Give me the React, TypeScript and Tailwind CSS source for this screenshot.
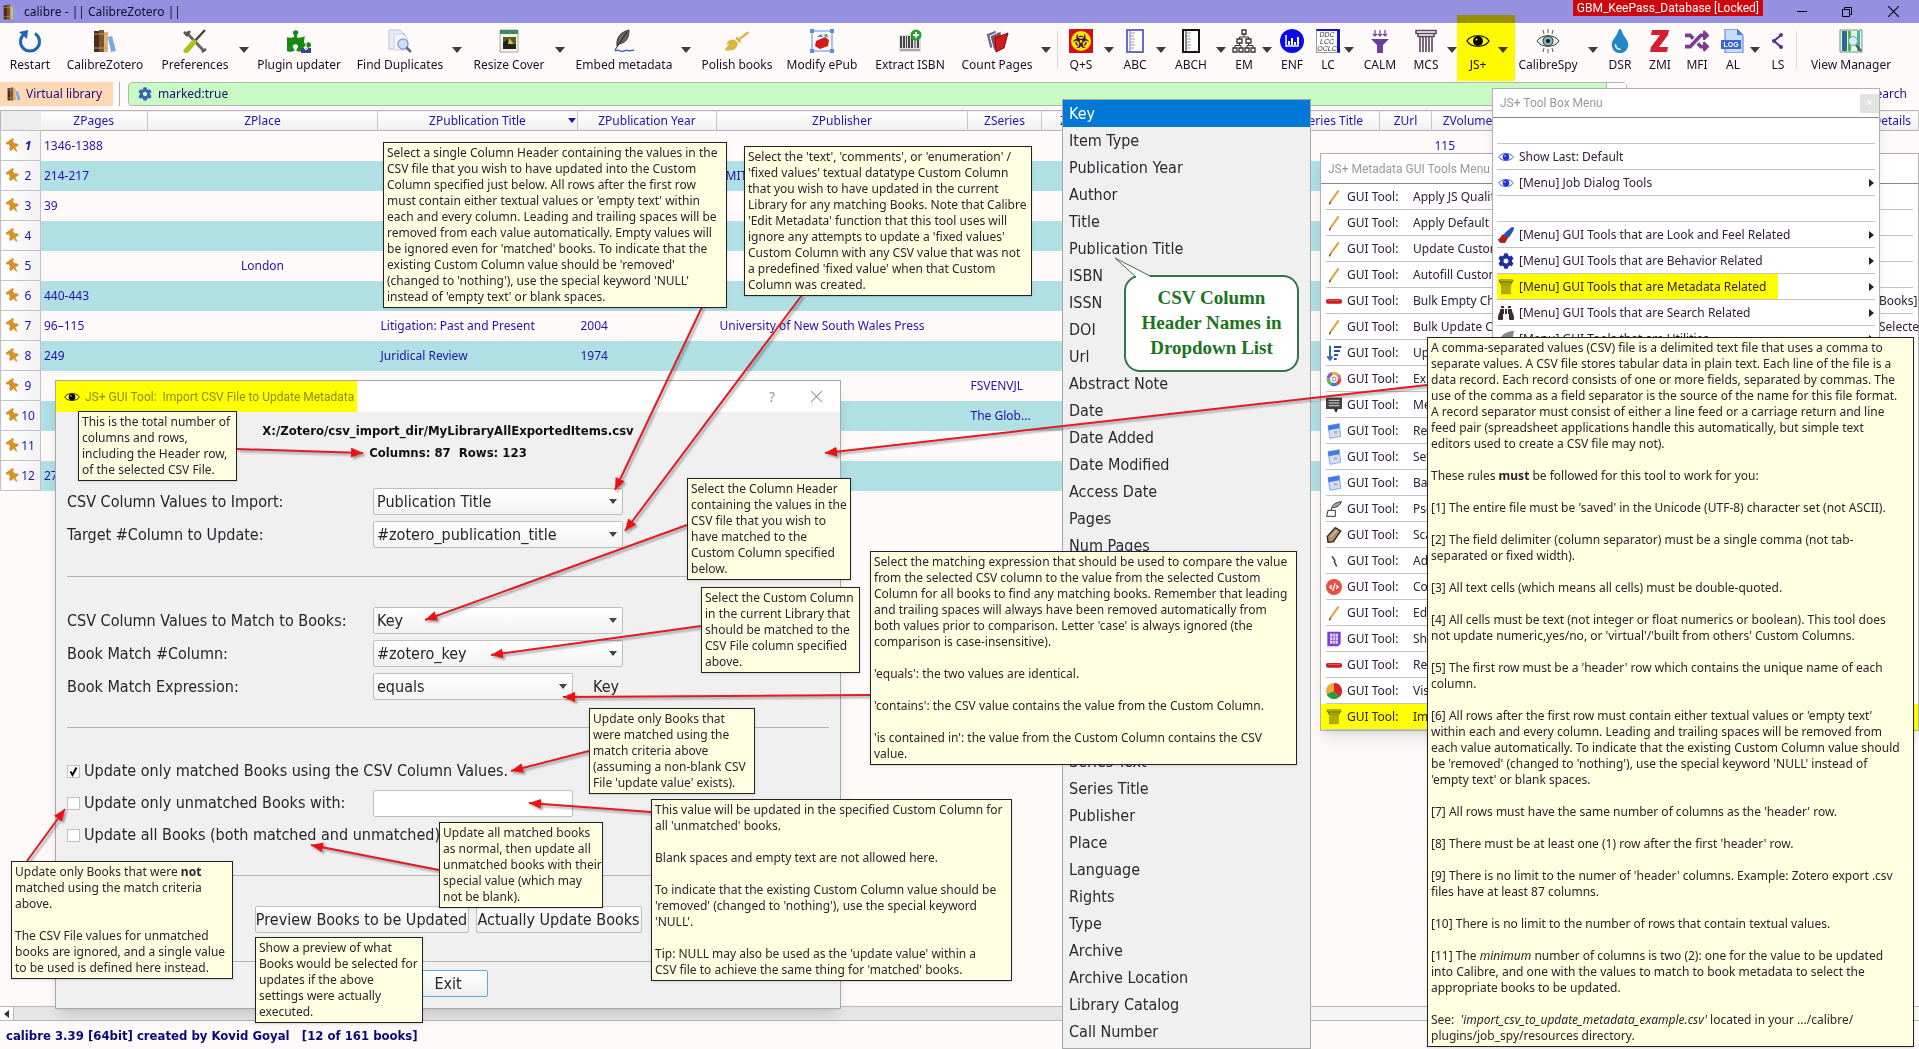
import type { ReactNode } from "react";
import {
  FaBinoculars,
  FaBiohazard,
  FaBroom,
  FaCog,
  FaCode,
  FaFeatherAlt,
  FaPaintBrush,
  FaPuzzlePiece,
  FaRandom,
  FaThumbtack,
  FaTint,
} from "react-icons/fa";

const UI = "font-['Noto_Sans',sans-serif] text-[12px] leading-4";
const FORM = "font-['DejaVu_Sans_Condensed','DejaVu_Sans',sans-serif] text-[16px]";

/* ---------- icons ---------- */

function Svg({ children, size = "size-6" }: { children: ReactNode; size?: string }) {
  return (
    <svg viewBox="0 0 24 24" fill="none" className={`${size} shrink-0`} aria-hidden="true">
      {children}
    </svg>
  );
}

function Books({ size }: { size?: string }) {
  return (
    <Svg size={size}>
      <path d="M1 2h5v21H1z" fill="#4a2c18" />
      <path d="M6 1h5v22H6z" fill="#7b5532" />
      <path d="M11 3h4v20h-4z" fill="#d8b777" />
      <path d="M1 5h14M1 19h14" stroke="#c79a55" />
      <path d="M15 8l4-1 4 15-5 1z" fill="#7aa8e8" />
    </Svg>
  );
}

function Eye({ iris = "#000", size }: { iris?: string; size?: string }) {
  return (
    <Svg size={size}>
      <path d="M1 12C5 5 19 5 23 12 19 19 5 19 1 12z" stroke={iris} strokeWidth="1.2" fill="#fff" fillOpacity=".25" />
      <circle cx="12" cy="12" r="5" fill={iris} />
      <circle cx="10.5" cy="10.5" r="1" fill="#fff" />
    </Svg>
  );
}

function Pillar({ color, size }: { color: string; size?: string }) {
  return (
    <Svg size={size}>
      <path d="M2 1.500h20v3H2zM4 4.500h16v3H4z" stroke={color} strokeWidth="1.500" />
      <path d="M6 8v15M9 8v15M12 8v15M15 8v15M18 8v15" stroke={color} strokeWidth="1.600" />
    </Svg>
  );
}

function Pencil() {
  return (
    <Svg size="size-4">
      <path d="M19 2L7 19" stroke="#d9a441" strokeWidth="3" />
      <path d="M7 19l-2 4" stroke="#5b4326" strokeWidth="2" />
    </Svg>
  );
}

function Minus() {
  return (
    <Svg size="size-4">
      <rect x="0" y="9" width="24" height="7" rx="3" fill="#c81e1e" />
      <path d="M3 11h18" stroke="#f08080" />
    </Svg>
  );
}

function Calendar() {
  return (
    <Svg size="size-4">
      <path d="M3 4l17-3 2 19-16 3z" fill="#cfe0f8" stroke="#5f86cf" />
      <path d="M3 4l17-3v7L4 11z" fill="#3f7be0" />
      <path d="M12 12h5v4h-5z" fill="#e7a0a8" />
    </Svg>
  );
}

function Ruler({ color }: { color: string }) {
  return (
    <Svg>
      <path d="M4 1h16v22H4z" fill="#fff" stroke={color} strokeWidth="2" />
      <path d="M7 2v20" stroke={color} />
      <path d="M8 4h4M8 7h3M8 10h4M8 13h3M8 16h4M8 19h3" stroke="#999" />
    </Svg>
  );
}

function Restart() {
  return (
    <Svg>
      <path d="M7 4.500a9.500 9.500 0 1 0 10 0" stroke="#1f66b5" strokeWidth="3" />
      <path d="M1 3l9-2-1 9z" fill="#1f66b5" />
    </Svg>
  );
}

function Tools() {
  return (
    <Svg>
      <path d="M3 3l17 18" stroke="#666" strokeWidth="3" />
      <path d="M1 3l3 3 3-4M19 23l4-3" stroke="#555" strokeWidth="2.500" />
      <path d="M22 1L10 14" stroke="#444" strokeWidth="2.500" />
      <path d="M11 13l-8 9" stroke="#a9c41c" strokeWidth="5" strokeLinecap="round" />
    </Svg>
  );
}

function Puzzle() {
  return (
    <span className="relative">
      <FaPuzzlePiece className="size-6 text-[#148a14]" />
      <svg viewBox="0 0 10 10" className="absolute right-0 bottom-0 size-2.5" aria-hidden="true">
        <path d="M0 5h10v5H0z" fill="#35448f" />
        <path d="M5 0v7M3 5l2 2 2-2" stroke="#fff" fill="none" />
      </svg>
    </span>
  );
}

function FindPages() {
  return (
    <Svg>
      <path d="M1 1h11l5 5v14H1z" fill="#e9ecf8" stroke="#b8bfe0" />
      <path d="M6 5h9l4 4v12H6z" fill="#f4f6fd" stroke="#c4cae6" />
      <circle cx="15" cy="15" r="5" fill="#cfe0fb" stroke="#8aa2d6" strokeWidth="1.500" />
      <path d="M18.500 18.500L23 23" stroke="#666" strokeWidth="2.500" />
    </Svg>
  );
}

function CoverImage() {
  return (
    <Svg>
      <path d="M3 1h18v22H3z" fill="#f3f3ee" stroke="#a0a89a" />
      <path d="M3 1h18v4H3z" fill="#3d8b5c" />
      <path d="M6 8h13v12H6z" fill="#5a5a20" />
      <path d="M6 14l5-4 8 6v4H6z" fill="#222" />
      <path d="M12 9l5 6h-6z" fill="#d8c23a" />
    </Svg>
  );
}

function Quill() {
  return (
    <Svg>
      <path d="M5 17C4 8 9 3 17 1c0 8-3 13-10 14z" fill="#666" stroke="#333" />
      <path d="M15 3L3 21" stroke="#222" />
      <path d="M3 22c5-3 4 2 9 0s3 1 10-1" stroke="#4a68c8" strokeWidth="1.500" />
    </Svg>
  );
}

function ModifyBook() {
  return (
    <Svg>
      <path d="M2 2h20v20H2z" stroke="#8fb2e0" strokeWidth="1.500" />
      <path d="M0 0h4v4H0zM20 0h4v4h-4zM0 20h4v4H0zM20 20h4v4h-4z" fill="#5b8fd8" />
      <path d="M6 12l9-4 4 3-1 6-8 3-5-3z" fill="#d41a1a" />
      <path d="M7 8l4-3 2 3z" fill="#4b7fe0" />
      <path d="M13 6l4-1 1 4z" fill="#3fa63f" />
    </Svg>
  );
}

function Barcode() {
  return (
    <Svg>
      <path d="M1 6h22v17H1z" fill="#ddd" />
      <path d="M3 7v12M6 7v12M11 7v12M14 7v12M20 7v12" stroke="#222" strokeWidth="1.600" />
      <path d="M8.500 7v12M17 7v12" stroke="#222" strokeWidth=".8" />
      <path d="M2 21h20" stroke="#777" />
      <circle cx="18" cy="6" r="5.500" fill="#1da52c" />
      <path d="M18 3v6M15 6h6" stroke="#fff" strokeWidth="1.800" />
    </Svg>
  );
}

function RedBooks() {
  return (
    <Svg>
      <path d="M1 5l10-4 2 14-8 5z" fill="#6c6c8c" stroke="#fff" />
      <path d="M5 7l11-5 1 14-8 6z" fill="#8d4a5a" stroke="#fff" />
      <path d="M10 9l13-5-4 15-8 4z" fill="#d01c1c" stroke="#7c0d0d" />
    </Svg>
  );
}

function Biohazard() {
  return (
    <span className="grid size-6 place-items-center bg-[#d40f1c]">
      <span className="grid size-5 place-items-center rounded-full bg-[#ffe600]">
        <FaBiohazard className="size-4 text-[#3a1a5a]" />
      </span>
    </span>
  );
}

function OrgChart() {
  return (
    <Svg>
      <path
        d="M10 1h4v4h-4zM5 10h5v4H5zM14 10h5v4h-5zM1 19h4v4H1zM7 19h4v4H7zM13 19h4v4h-4zM19 19h4v4h-4z"
        stroke="#333"
        strokeWidth="1.300"
      />
      <path d="M12 5v3M7.500 10V8h9v2M7.500 14v2.500M3 19v-2.500h6V19M16.500 14v2.500M15 19v-2.500h6V19" stroke="#333" />
    </Svg>
  );
}

function ChartDisc() {
  return (
    <Svg>
      <circle cx="12" cy="12" r="12" fill="#0b0bf0" />
      <path d="M6 6v11h13" stroke="#fff" strokeWidth="1.500" />
      <path d="M9 16v-4M12 16V9M15 16v-3M18 16V8" stroke="#fff" strokeWidth="2" />
    </Svg>
  );
}

function CodeCard() {
  return (
    <span className="flex size-6 flex-col items-center justify-center border border-t-2 border-r-[3px] border-[#1515c8] border-b-[#999] border-l-[#999] bg-white font-['Liberation_Sans'] text-[7px] leading-[7px] text-[#333] italic">
      <span>DDC</span>
      <span>LCC</span>
      <span>OCLC</span>
    </span>
  );
}

function Funnel() {
  return (
    <Svg>
      <path d="M3 10h18l-6 6v8H9v-8z" fill="#6b3f9c" />
      <path d="M7 1v6M12 1v6M17 1v6M5 5l2 2 2-2M10 5l2 2 2-2M15 5l2 2 2-2" stroke="#6b3f9c" strokeWidth="1.200" />
    </Svg>
  );
}

function SpyEye() {
  return (
    <Svg>
      <path d="M1 12C5 5 19 5 23 12 19 19 5 19 1 12z" stroke="#333" fill="#e6f2f4" />
      <circle cx="12" cy="12" r="5" fill="#7fb3bd" stroke="#333" />
      <circle cx="12" cy="12" r="2" fill="#111" />
      <path d="M12 0v4M7 1l1 4M17 1l-1 4M12 20v4M7 23l1-4M17 23l-1-4" stroke="#555" />
    </Svg>
  );
}

function ZMark() {
  return (
    <Svg>
      <path d="M4 1h17l-1 5-9 12h9l-1 5H2l1-5 9-12H3z" fill="#d21f2f" />
    </Svg>
  );
}

function LogFile() {
  return (
    <span className="relative grid">
      <Svg>
        <path d="M4 0h12l6 6v18H4z" fill="#c9dbfb" stroke="#4e79d8" />
        <path d="M16 0v6h6z" fill="#4e79d8" />
        <path d="M0 11h20v9H0z" fill="#3a67d0" />
      </Svg>
      <span className="absolute inset-x-0 top-3 pr-1 text-center font-['Liberation_Sans'] text-[7px] leading-[7px] font-bold text-white">
        LOG
      </span>
    </span>
  );
}

function Share() {
  return (
    <Svg>
      <path d="M15 6l-7 6 7 6" stroke="#5a2d91" strokeWidth="2" />
      <circle cx="15" cy="6" r="2" fill="#5a2d91" />
      <circle cx="8" cy="12" r="2" fill="#5a2d91" />
      <circle cx="15" cy="18" r="2" fill="#5a2d91" />
    </Svg>
  );
}

function ViewColumns() {
  return (
    <Svg>
      <path d="M1 1h22v22H1z" fill="#e9f3ee" stroke="#6e8f8a" />
      <path d="M3 2h5v20H3z" fill="#2c6c8c" />
      <path d="M9 2h3v20H9z" fill="#4dbb3a" />
      <path d="M18 2h3v20h-3z" fill="#49b0a0" />
      <circle cx="14" cy="12" r="4.500" fill="#d6ecfb" stroke="#7799b5" />
      <path d="M17 16l5 6" stroke="#555" strokeWidth="2" />
    </Svg>
  );
}

function SortDown() {
  return (
    <Svg size="size-4">
      <path d="M6 1v20M2 17l4 5 4-5" stroke="#2f6fb8" strokeWidth="3" />
      <path d="M12 3h11M12 9h9M12 15h6M12 21h4" stroke="#2f4f88" strokeWidth="3" />
    </Svg>
  );
}

function ColorRing() {
  return (
    <Svg size="size-4">
      <circle cx="12" cy="12" r="8.500" stroke="#e4483c" strokeWidth="5" strokeDasharray="9 45" />
      <circle cx="12" cy="12" r="8.500" stroke="#3b7be0" strokeWidth="5" strokeDasharray="9 45" strokeDashoffset="-9" />
      <circle cx="12" cy="12" r="8.500" stroke="#5cb848" strokeWidth="5" strokeDasharray="9 45" strokeDashoffset="-18" />
      <circle cx="12" cy="12" r="8.500" stroke="#9a55c8" strokeWidth="5" strokeDasharray="9 45" strokeDashoffset="-27" />
      <circle cx="12" cy="12" r="8.500" stroke="#f0b030" strokeWidth="5" strokeDasharray="9 45" strokeDashoffset="-36" />
      <circle cx="12" cy="12" r="8.500" stroke="#e070a0" strokeWidth="5" strokeDasharray="9 45" strokeDashoffset="-45" />
      <circle cx="12" cy="12" r="3" stroke="#888" strokeWidth="1.500" />
    </Svg>
  );
}

function Board() {
  return (
    <Svg size="size-4">
      <path d="M0 1h24v17H0z" fill="#444" />
      <path d="M4 5h16M4 9h16M4 13h16" stroke="#ddd" strokeWidth="1.500" />
      <path d="M12 18h6l-3 6z" fill="#222" />
    </Svg>
  );
}

function InkPen() {
  return (
    <Svg size="size-4">
      <path d="M3 14h11v9H1z" stroke="#333" strokeWidth="1.500" fill="#fff" />
      <path d="M8 14C8 6 14 2 23 1c-2 6-6 8-13 9" stroke="#333" strokeWidth="1.500" fill="#aaa" />
    </Svg>
  );
}

function Tag() {
  return (
    <Svg size="size-4">
      <path d="M2 14L14 1l8 5-11 16-8 1z" fill="#b89070" stroke="#222" strokeWidth="2" />
      <path d="M7 15L16 5" stroke="#fff" />
    </Svg>
  );
}

function Slash() {
  return (
    <Svg size="size-4">
      <path d="M9 5l5 7M12 12l4 8" stroke="#333" strokeWidth="2" />
    </Svg>
  );
}

function CodeDisc() {
  return (
    <span className="grid size-4 place-items-center rounded-full bg-[#e8503e] text-white">
      <FaCode className="size-2.5" />
    </span>
  );
}

function GridSheet() {
  return (
    <Svg size="size-4">
      <path d="M2 1h20v18l-4 4H2z" fill="#7a3fd0" />
      <path d="M6 4h12v15H6z" fill="#e6dafa" />
      <path d="M10 4v15M14 4v15M6 9h12M6 14h12" stroke="#7a3fd0" />
    </Svg>
  );
}

function Pie() {
  return (
    <Svg size="size-4">
      <circle cx="12" cy="12" r="12" fill="#f2a93b" />
      <path d="M12 12V0a12 12 0 0 1 8 21z" fill="#e0202c" />
      <path d="M12 12l8 9A12 12 0 0 1 1 17z" fill="#2a9c46" />
    </Svg>
  );
}

function Pin() {
  return <FaThumbtack className="size-[14px] -rotate-35 text-[#d8902a]" />;
}

function Caret({ className = "w-[10px]" }: { className?: string }) {
  return (
    <span className={`flex justify-center ${className}`}>
      <svg viewBox="0 0 10 6" className="h-[6px] w-[10px] shrink-0" aria-hidden="true">
        <path d="M0 0h10L5 6z" fill="#3c3c3c" />
      </svg>
    </span>
  );
}

/* ---------- toolbar ---------- */

type Tool = { label: string; icon: ReactNode; w: string; caret?: string; sepAfter?: boolean };

const TOOLS: Tool[] = [
  { label: "Restart", icon: <Restart />, w: "w-[60px]" },
  { label: "CalibreZotero", icon: <Books />, w: "w-[90px]" },
  { label: "Preferences", icon: <Tools />, w: "w-[90px]", caret: "w-[8px]" },
  { label: "Plugin updater", icon: <Puzzle />, w: "w-[102px]" },
  { label: "Find Duplicates", icon: <FindPages />, w: "w-[100px]", caret: "w-[14px]" },
  { label: "Resize Cover", icon: <CoverImage />, w: "w-[90px]", caret: "w-[12px]" },
  { label: "Embed metadata", icon: <Quill />, w: "w-[116px]", caret: "w-[8px]" },
  { label: "Polish books", icon: <FaBroom className="size-6 text-[#d9b93c]" />, w: "w-[94px]" },
  { label: "Modify ePub", icon: <ModifyBook />, w: "w-[76px]" },
  { label: "Extract ISBN", icon: <Barcode />, w: "w-[100px]" },
  { label: "Count Pages", icon: <RedBooks />, w: "w-[74px]", caret: "w-[23px]", sepAfter: true },
  { label: "Q+S", icon: <Biohazard />, w: "w-[46px]", caret: "w-[10px]" },
  { label: "ABC", icon: <Ruler color="#6a6ac8" />, w: "w-[42px]", caret: "w-[10px]" },
  { label: "ABCH", icon: <Ruler color="#1a1010" />, w: "w-[50px]", caret: "w-[10px]" },
  { label: "EM", icon: <OrgChart />, w: "w-[36px]", caret: "w-[10px]" },
  { label: "ENF", icon: <ChartDisc />, w: "w-[40px]" },
  { label: "LC", icon: <CodeCard />, w: "w-[32px]", caret: "w-[10px]" },
  { label: "CALM", icon: <Funnel />, w: "w-[52px]" },
  { label: "MCS", icon: <Pillar color="#5c4460" />, w: "w-[40px]", caret: "w-[12px]" },
  { label: "JS+", icon: <Eye />, w: "w-[40px]", caret: "w-[10px]" },
  { label: "CalibreSpy", icon: <SpyEye />, w: "w-[80px]", caret: "w-[10px]" },
  { label: "DSR", icon: <FaTint className="size-6 text-[#2487c4]" />, w: "w-[44px]" },
  { label: "ZMI", icon: <ZMark />, w: "w-[36px]" },
  { label: "MFI", icon: <FaRandom className="size-6 text-[#7a3f8c]" />, w: "w-[38px]" },
  { label: "AL", icon: <LogFile />, w: "w-[34px]", caret: "w-[10px]" },
  { label: "LS", icon: <Share />, w: "w-[36px]", sepAfter: true },
  { label: "View Manager", icon: <ViewColumns />, w: "w-[108px]" },
];

function TitleBar() {
  return (
    <header className="flex h-[23px] items-center bg-[#9590df] pl-[3px] text-[#101030]">
      <Books size="size-4" />
      <h1 className="ml-[5px] whitespace-pre">calibre - || CalibreZotero ||</h1>
      <span className="mr-[28px] ml-auto self-start bg-[#d0040c] px-1 font-['Roboto',sans-serif] text-white">
        GBM_KeePass_Database [Locked]
      </span>
      <button type="button" aria-label="Minimize" className="grid w-[22px] place-items-center">
        <span className="h-px w-[10px] bg-black" />
      </button>
      <button type="button" aria-label="Restore" className="ml-[22px] grid w-[24px] place-items-center">
        <svg viewBox="0 0 10 10" className="size-[10px]" fill="none" stroke="#000" aria-hidden="true">
          <path d="M.5 2.500h7v7h-7zM2.500 2.500v-2h7v7h-2" />
        </svg>
      </button>
      <button type="button" aria-label="Close" className="mr-[14px] ml-[22px] grid w-[24px] place-items-center">
        <svg viewBox="0 0 10 10" className="size-[11px]" fill="none" stroke="#000" aria-hidden="true">
          <path d="M0 0l10 10M10 0L0 10" />
        </svg>
      </button>
    </header>
  );
}

function Toolbar() {
  return (
    <nav className="flex h-[59px] overflow-hidden text-[#1a1020]">
      {TOOLS.map((t) => (
        <div key={t.label} className="flex shrink-0 pt-[6px]">
          <button type="button" className={`flex flex-col items-center gap-1 ${t.w}`}>
            {t.icon}
            <span className="whitespace-nowrap">{t.label}</span>
          </button>
          {t.caret && (
            <div className="pt-[18px]">
              <Caret className={t.caret} />
            </div>
          )}
          {t.sepAfter && <div className="mt-[2px] h-[38px] w-px bg-[#dcd4d8]" />}
        </div>
      ))}
    </nav>
  );
}

function SearchRow() {
  return (
    <div className="flex h-[24px] items-stretch text-[#1a1080]">
      <button type="button" className="flex w-[113px] items-center gap-[5px] bg-[#ffd9b5] pl-[7px]">
        <Books size="size-3.5" />
        Virtual library
      </button>
      <div className="mr-2 ml-[6px] w-px bg-[#b0b0b0]" />
      <label className="flex grow items-center gap-[6px] rounded-sm border border-[#b4b4b4] bg-[#c9fac4] pl-[9px]">
        <FaCog className="size-[14px] text-[#3b62b4]" />
        <input aria-label="Search" defaultValue="marked:true" className="grow bg-transparent outline-none" />
        <span className="h-full w-5 border-l border-[#b4b4b4] bg-[#fffafa]" />
      </label>
      <div className="flex w-[292px] items-center justify-end pr-3">
        <button type="button">Saved search</button>
      </div>
    </div>
  );
}

/* ---------- book table ---------- */

const COLUMNS: [string, string][] = [
  ["ZPages", "w-[107px]"],
  ["ZPlace", "w-[230px]"],
  ["ZPublication Title", "w-[200px]"],
  ["ZPublication Year", "w-[139px]"],
  ["ZPublisher", "w-[251px]"],
  ["ZSeries", "w-[74px]"],
  ["ZSeries Text", "w-[120px]"],
  ["ZSeries Title", "w-[218px]"],
  ["ZUrl", "w-[52px]"],
  ["ZVolume", "w-[72px]"],
  ["Details", "w-auto"],
];

const BOOKS: Record<string, string>[] = [
  { ZPages: "1346-1388", ZVolume: "115" },
  { ZPages: "214-217", ZPublisher: "\u2002MIT" },
  { ZPages: "39" },
  {},
  { ZPlace: "London" },
  { ZPages: "440-443" },
  {
    ZPages: "96–115",
    "ZPublication Title": "Litigation: Past and Present",
    "ZPublication Year": "2004",
    ZPublisher: "University of New South Wales Press",
  },
  { ZPages: "249", "ZPublication Title": "Juridical Review", "ZPublication Year": "1974" },
  { ZSeries: "FSVENVJL" },
  { ZSeries: "The Glob..." },
  {},
  { ZPages: "27" },
];

function headAlign(name: string) {
  if (name === "Details") return "text-right pr-[7px]";
  if (name === "ZSeries Title") return "text-right pr-[16px]";
  if (name === "ZSeries Text") return "text-left pl-[18px]";
  return "text-center";
}

function BookTable() {
  return (
    <table className="mt-1 w-full table-fixed border-collapse text-[#2412a8]">
      <thead>
        <tr className="h-[20px] border border-[#b8b4b8] bg-linear-to-b from-white to-[#f1eff1]">
          <th className="w-[40px] bg-[#ececec]" />
          {COLUMNS.map(([name, w]) => (
            <th key={name} className={`border-r border-[#c8c4c8] font-normal whitespace-nowrap ${w} ${headAlign(name)}`}>
              <span className="inline-flex items-center">
                {name}
                {name === "ZPublication Title" && (
                  <svg viewBox="0 0 8 5" className="-mr-[50px] ml-[42px] h-[5px] w-2" aria-hidden="true">
                    <path d="M0 0h8L4 5z" fill="#2412a8" />
                  </svg>
                )}
              </span>
            </th>
          ))}
        </tr>
      </thead>
      <tbody>
        {BOOKS.map((b, i) => (
          <tr key={i} className="h-[30px] even:bg-[#b0dfe4]">
            <th className="border border-[#c4c0c4] bg-linear-to-r from-white to-[#f3f1f3] p-0 font-normal">
              <span className="flex items-center justify-between pr-[5px] pl-[5px]">
                <Pin />
                <span className={i === 0 ? "w-[14px] font-bold italic" : "w-[14px]"}>{i + 1}</span>
              </span>
            </th>
            {COLUMNS.map(([name]) => (
              <td key={name} className={`px-[3px] whitespace-nowrap ${name === "ZPlace" ? "text-center" : ""}`}>
                {b[name]}
              </td>
            ))}
          </tr>
        ))}
      </tbody>
    </table>
  );
}

function BottomBars() {
  return (
    <footer className="mt-auto">
      <div className="flex h-[15px] border-y border-[#b8b8b8] bg-[#e6e6e6]">
        <button type="button" aria-label="Scroll left" className="grid w-[14px] place-items-center border-r border-[#b8b8b8] bg-white">
          <svg viewBox="0 0 5 8" className="h-2 w-[5px]" aria-hidden="true">
            <path d="M5 0v8L0 4z" fill="#333" />
          </svg>
        </button>
        <div className="ml-auto w-1/3 bg-[#f6f5f6]" />
      </div>
      <p className="h-[28px] pt-[7px] pl-[6px] font-['DejaVu_Sans_Condensed','DejaVu_Sans',sans-serif] text-[13px] font-bold whitespace-pre text-[#08087a]">
        calibre 3.39 [64bit] created by Kovid Goyal{"   "}[12 of 161 books]
      </p>
    </footer>
  );
}

/* ---------- import dialog ---------- */

function Combo({ id, label, value, w = "w-[250px]", after }: { id: string; label: string; value: string; w?: string; after?: string }) {
  return (
    <div className="flex h-[27px] items-center">
      <label htmlFor={id} className="w-[306px] shrink-0">
        {label}
      </label>
      <span className={`relative ${w}`}>
        <select
          id={id}
          defaultValue={value}
          className="h-[27px] w-full appearance-none rounded-xs border border-[#bfbfbf] bg-linear-to-b from-white to-[#f3f3f3] pl-[3px] leading-[24px]"
        >
          <option>{value}</option>
        </select>
        <svg viewBox="0 0 8 5" className="pointer-events-none absolute top-[11px] right-[6px] h-[5px] w-2" aria-hidden="true">
          <path d="M0 0h8L4 5z" fill="#444" />
        </svg>
      </span>
      {after && <span className="ml-[20px]">{after}</span>}
    </div>
  );
}

function Check({ id, label, checked = false }: { id: string; label: string; checked?: boolean }) {
  return (
    <span className="flex h-8 items-center">
      <span className="relative grid">
        <input
          id={id}
          type="checkbox"
          defaultChecked={checked}
          className="peer size-[13px] appearance-none border border-[#c0c0c0] bg-white"
        />
        <svg viewBox="0 0 13 13" className="pointer-events-none absolute inset-0 hidden peer-checked:block" aria-hidden="true">
          <path d="M3.500 6.500L5.500 10 9.500 2.500" fill="none" stroke="#000" strokeWidth="2" />
        </svg>
      </span>
      <label htmlFor={id} className="ml-1 whitespace-nowrap">
        {label}
      </label>
    </span>
  );
}

function Rule({ className }: { className: string }) {
  return <hr className={`border-[#b4b4b4] ${className}`} />;
}

function ImportDialog() {
  const button = "h-[27px] rounded-xs border bg-linear-to-b from-white to-[#efefef] whitespace-nowrap";
  return (
    <section className="absolute top-[380px] left-[55px] w-[786px] border border-[#a8a8a8] bg-[#f0f0f0] shadow-lg">
      <div className="flex h-[31px] items-center bg-white">
        <h2 className="flex h-full w-[301px] items-center gap-[5px] bg-[#ffff00] pl-2 font-['Roboto',sans-serif] whitespace-pre text-[#8c8c14]">
          <Eye size="size-4" />
          JS+ GUI Tool:{"  "}Import CSV File to Update Metadata
        </h2>
        <button type="button" aria-label="Help" className="mr-[36px] ml-auto text-sm text-[#999]">
          ?
        </button>
        <button type="button" aria-label="Close" className="mr-[18px]">
          <svg viewBox="0 0 10 10" className="size-[11px]" fill="none" stroke="#999" aria-hidden="true">
            <path d="M0 0l10 10M10 0L0 10" />
          </svg>
        </button>
      </div>
      <form className={`px-[11px] pb-[11px] text-[#26262a] ${FORM}`}>
        <div className="space-y-[6px] pt-[11px] text-center text-[13px] leading-4 font-bold whitespace-pre text-[#101010]">
          <p>X:/Zotero/csv_import_dir/MyLibraryAllExportedItems.csv</p>
          <p>Columns: 87{"  "}Rows: 123</p>
        </div>
        <div className="mt-[27px] space-y-[6px]">
          <Combo id="import" label="CSV Column Values to Import:" value="Publication Title" />
          <Combo id="target" label="Target #Column to Update:" value="#zotero_publication_title" />
        </div>
        <Rule className="mt-7" />
        <div className="mt-[30px] space-y-[6px]">
          <Combo id="match" label="CSV Column Values to Match to Books:" value="Key" />
          <Combo id="column" label="Book Match #Column:" value="#zotero_key" />
          <Combo id="expression" label="Book Match Expression:" value="equals" w="w-[200px]" after="Key" />
        </div>
        <Rule className="mt-[27px]" />
        <div className="mt-[27px]">
          <Check id="matched" label="Update only matched Books using the CSV Column Values." checked />
          <div className="flex items-center">
            <span className="w-[306px]">
              <Check id="unmatched" label="Update only unmatched Books with:" />
            </span>
            <input aria-label="Value for unmatched Books" className="h-[27px] w-[200px] rounded-xs border border-[#bfbfbf] bg-white px-1" />
          </div>
          <Check id="all" label="Update all Books (both matched and unmatched)." />
        </div>
        <Rule className="mt-6" />
        <div className="mt-[30px] flex justify-center gap-[7px]">
          <button type="button" className={`w-[214px] border-[#bfbfbf] ${button}`}>
            Preview Books to be Updated
          </button>
          <button type="button" className={`w-[166px] border-[#bfbfbf] ${button}`}>
            Actually Update Books
          </button>
        </div>
        <Rule className="mt-7" />
        <div className="mt-2 flex justify-center">
          <button type="button" className={`w-[80px] border-[#5aaadc] ${button}`}>
            Exit
          </button>
        </div>
      </form>
    </section>
  );
}

/* ---------- header names list ---------- */

const HEADER_NAMES = [
  "Key", "Item Type", "Publication Year", "Author", "Title", "Publication Title", "ISBN", "ISSN", "DOI", "Url",
  "Abstract Note", "Date", "Date Added", "Date Modified", "Access Date", "Pages", "Num Pages", "Issue", "Volume",
  "Number Of Volumes", "Journal Abbreviation", "Short Title", "Series", "Series Number", "Series Text",
  "Series Title", "Publisher", "Place", "Language", "Rights", "Type", "Archive", "Archive Location",
  "Library Catalog", "Call Number",
];

function HeaderList() {
  return (
    <ul className={`absolute top-[99px] bottom-0 left-[1062px] w-[249px] overflow-hidden border border-[#a8a8a8] bg-[#f0f0f0] text-[#2a2a2e] ${FORM}`}>
      {HEADER_NAMES.map((n, i) => (
        <li key={n} className={`h-[27px] pl-[6px] leading-[27px] ${i === 0 ? "bg-[#0078d7] text-white" : ""}`}>
          {n}
        </li>
      ))}
    </ul>
  );
}

function Callout() {
  return (
    <div className="absolute top-[257px] left-[1114px] w-[185px]">
      <p className="mt-[18px] ml-[10px] rounded-[16px] border-2 border-[#35734a] bg-white pt-[8px] pb-[10px] text-center font-['Liberation_Serif',serif] text-[19px] leading-[25px] font-bold text-[#1c7420]">
        CSV Column
        <br />
        Header Names in
        <br />
        Dropdown List
      </p>
      <svg viewBox="0 0 40 22" className="absolute top-0 left-0 h-[22px] w-10" aria-hidden="true">
        <path d="M22 20L1 1l35 18v2H22z" fill="#fff" />
        <path d="M22 20L1 1l35 18" fill="none" stroke="#35734a" />
      </svg>
    </div>
  );
}

/* ---------- plugin menus ---------- */

const TOOL_ROWS: [ReactNode, string, string?][] = [
  [<Pencil />, "Apply JS Qualified"],
  [<Pencil />, "Apply Default"],
  [<Pencil />, "Update Custom"],
  [<Pencil />, "Autofill Custom"],
  [<Minus />, "Bulk Empty Ch", "Books]"],
  [<Pencil />, "Bulk Update C", "Selected"],
  [<SortDown />, "Update"],
  [<ColorRing />, "Export"],
  [<Board />, "Metadata"],
  [<Calendar />, "Reset"],
  [<Calendar />, "Set"],
  [<Calendar />, "Backup"],
  [<InkPen />, "Pseudo"],
  [<Tag />, "Scan"],
  [<Slash />, "Add", "        s]"],
  [<CodeDisc />, "Copy"],
  [<Pencil />, "Edit"],
  [<GridSheet />, "Show"],
  [<Minus />, "Remove"],
  [<Pie />, "Visualize"],
  [<Pillar color="#6b6410" size="size-4" />, "Import CSV File"],
];

function MetadataMenu() {
  return (
    <section className="absolute top-[153px] right-0 left-[1320px] border border-[#b0b0b0] bg-white text-[#33203a] shadow-lg">
      <h2 className="h-[30px] border-b border-[#888] pl-[7px] font-['Roboto',sans-serif] leading-[31px] text-[#999]">
        JS+ Metadata GUI Tools Menu
      </h2>
      <ul>
        {TOOL_ROWS.map(([icon, name, tail], i) => (
          <li key={i} className={`px-[5px] ${i === TOOL_ROWS.length - 1 ? "bg-[#ffff00]" : ""}`}>
            <button type="button" className="flex h-[26px] w-full items-center border-b border-[#c4c4c4] text-left whitespace-pre">
              {icon}
              <span className="ml-[5px] w-[66px]">GUI Tool:</span>
              {name}
              {tail && <span className="ml-auto w-[34px]">{tail}</span>}
            </button>
          </li>
        ))}
      </ul>
    </section>
  );
}

function LookBrush() {
  return (
    <span className="relative grid">
      <FaPaintBrush className="size-4 text-[#2456b8]" />
      <svg viewBox="0 0 16 16" className="absolute inset-0" aria-hidden="true">
        <path d="M1 12l4-5 5 4-3 5-6-1z" fill="#b81c14" />
      </svg>
    </span>
  );
}

const BOX_ROWS: { icon?: ReactNode; label?: string; sub?: boolean; mark?: boolean }[] = [
  {},
  { icon: <Eye iris="#2233dd" size="size-4" />, label: "Show Last: Default" },
  { icon: <Eye iris="#2233dd" size="size-4" />, label: "[Menu] Job Dialog Tools", sub: true },
  {},
  { icon: <LookBrush />, label: "[Menu] GUI Tools that are Look and Feel Related", sub: true },
  { icon: <FaCog className="size-4 text-[#1c30a0]" />, label: "[Menu] GUI Tools that are Behavior Related", sub: true },
  { icon: <Pillar color="#6b6410" size="size-4" />, label: "[Menu] GUI Tools that are Metadata Related", sub: true, mark: true },
  { icon: <FaBinoculars className="size-4 text-[#3a2c2c]" />, label: "[Menu] GUI Tools that are Search Related", sub: true },
  { icon: <FaFeatherAlt className="size-4 text-[#888]" />, label: "[Menu] GUI Tools that are Utilities", sub: true },
];

function ToolBoxMenu() {
  return (
    <section className="absolute top-[88px] left-[1492px] w-[388px] border border-[#b0b0b0] bg-white text-[#33203a] shadow-lg">
      <div className="flex h-[29px] items-center border-b border-[#888]">
        <h2 className="pl-[7px] font-['Roboto',sans-serif] text-[#999]">JS+ Tool Box Menu</h2>
        <button type="button" aria-label="Close" className="ml-auto size-[19px] bg-[#e2e2e2] text-white">
          ×
        </button>
      </div>
      <ul className="px-[4px]">
        {BOX_ROWS.map((r, i) => (
          <li key={i} className="flex h-[26px] items-center justify-between border-b border-[#c4c4c4]">
            {r.label && (
              <button type="button" className={`flex h-[25px] items-center gap-[5px] pr-3 pl-px ${r.mark ? "bg-[#ffff00]" : ""}`}>
                {r.icon}
                {r.label}
              </button>
            )}
            {r.sub && (
              <svg viewBox="0 0 5 8" className="mr-px h-2 w-[5px]" aria-hidden="true">
                <path d="M0 0v8l5-4z" fill="#222" />
              </svg>
            )}
          </li>
        ))}
      </ul>
    </section>
  );
}

/* ---------- annotations ---------- */

const ARROWS = [
  "M702 307L615 490",
  "M802 295L625 531",
  "M687 525L425 620",
  "M701 626L491 655",
  "M870 695L563 697",
  "M589 751L511 771",
  "M651 812L529 803",
  "M439 870L311 845",
  "M27 861L65 809",
  "M237 449L363 453",
  "M1427 385L825 453",
];

function Arrows() {
  return (
    <svg className="pointer-events-none absolute inset-0 size-full drop-shadow-[2px_2px_1px_rgba(0,0,0,0.35)]" aria-hidden="true">
      <defs>
        <marker id="head" viewBox="0 0 12 10" refX="12" refY="5" markerWidth="12" markerHeight="10" markerUnits="userSpaceOnUse" orient="auto">
          <path d="M0 0l12 5-12 5z" fill="#ee1111" />
        </marker>
      </defs>
      {ARROWS.map((d) => (
        <path key={d} d={d} stroke="#e01b24" strokeWidth="2" markerEnd="url(#head)" />
      ))}
    </svg>
  );
}

function Note({ place, children }: { place: string; children: ReactNode }) {
  return (
    <p className={`absolute border border-[#222] bg-[#ffffe1] py-[2px] pl-[3px] whitespace-pre text-[#33202c] shadow-sm ${place}`}>
      {children}
    </p>
  );
}

function Notes() {
  return (
    <>
      <Note place="top-[142px] left-[383px] w-[344px]">
        {`Select a single Column Header containing the values in the
CSV file that you wish to have updated into the Custom
Column specified just below. All rows after the first row
must contain either textual values or 'empty text' within
each and every column. Leading and trailing spaces will be
removed from each value automatically. Empty values will
be ignored even for 'matched' books. To indicate that the
existing Custom Column value should be 'removed'
(changed to 'nothing'), use the special keyword 'NULL'
instead of 'empty text' or blank spaces.`}
      </Note>
      <Note place="top-[146px] left-[744px] w-[288px]">
        {`Select the 'text', 'comments', or 'enumeration' /
'fixed values' textual datatype Custom Column
that you wish to have updated in the current
Library for any matching Books. Note that Calibre
'Edit Metadata' function that this tool uses will
ignore any attempts to update a 'fixed values'
Custom Column with any CSV value that was not
a predefined 'fixed value' when that Custom
Column was created.`}
      </Note>
      <Note place="top-[411px] left-[78px] w-[159px]">
        {`This is the total number of
columns and rows,
including the Header row,
of the selected CSV File.`}
      </Note>
      <Note place="top-[478px] left-[687px] w-[164px]">
        {`Select the Column Header
containing the values in the
CSV file that you wish to
have matched to the
Custom Column specified
below.`}
      </Note>
      <Note place="top-[587px] left-[701px] w-[159px]">
        {`Select the Custom Column
in the current Library that
should be matched to the
CSV File column specified
above.`}
      </Note>
      <Note place="top-[551px] left-[870px] w-[427px]">
        {`Select the matching expression that should be used to compare the value
from the selected CSV column to the value from the selected Custom
Column for all books to find any matching books. Remember that leading
and trailing spaces will always have been removed automatically from
both values prior to comparison. Letter 'case' is always ignored (the
comparison is case-insensitive).

'equals': the two values are identical.

'contains': the CSV value contains the value from the Custom Column.

'is contained in': the value from the Custom Column contains the CSV
value.`}
      </Note>
      <Note place="top-[708px] left-[589px] w-[166px]">
        {`Update only Books that
were matched using the
match criteria above
(assuming a non-blank CSV
File 'update value' exists).`}
      </Note>
      <Note place="top-[799px] left-[651px] w-[361px]">
        {`This value will be updated in the specified Custom Column for
all 'unmatched' books.

Blank spaces and empty text are not allowed here.

To indicate that the existing Custom Column value should be
'removed' (changed to 'nothing'), use the special keyword
'NULL'.

Tip: NULL may also be used as the 'update value' within a
CSV file to achieve the same thing for 'matched' books.`}
      </Note>
      <Note place="top-[822px] left-[439px] w-[164px]">
        {`Update all matched books
as normal, then update all
unmatched books with their
special value (which may
not be blank).`}
      </Note>
      <Note place="top-[861px] left-[11px] w-[222px]">
        Update only Books that were <b>not</b>
        {`
matched using the match criteria
above.

The CSV File values for unmatched
books are ignored, and a single value
to be used is defined here instead.`}
      </Note>
      <Note place="top-[937px] left-[255px] w-[168px]">
        {`Show a preview of what
Books would be selected for
updates if the above
settings were actually
executed.`}
      </Note>
      <Note place="top-[337px] left-[1427px] w-[487px]">
        {`A comma-separated values (CSV) file is a delimited text file that uses a comma to
separate values. A CSV file stores tabular data in plain text. Each line of the file is a
data record. Each record consists of one or more fields, separated by commas. The
use of the comma as a field separator is the source of the name for this file format.
A record separator must consist of either a line feed or a carriage return and line
feed pair (spreadsheet applications handle this automatically, but simple text
editors used to create a CSV file may not).

These rules `}
        <b>must</b>
        {` be followed for this tool to work for you:

[1] The entire file must be 'saved' in the Unicode (UTF-8) character set (not ASCII).

[2] The field delimiter (column separator) must be a single comma (not tab-
separated or fixed width).

[3] All text cells (which means all cells) must be double-quoted.

[4] All cells must be text (not integer or float numerics or boolean). This tool does
not update numeric,yes/no, or 'virtual'/'built from others' Custom Columns.

[5] The first row must be a 'header' row which contains the unique name of each
column.

[6] All rows after the first row must contain either textual values or 'empty text'
within each and every column. Leading and trailing spaces will be removed from
each value automatically. To indicate that the existing Custom Column value should
be 'removed' (changed to 'nothing'), use the special keyword 'NULL' instead of
'empty text' or blank spaces.

[7] All rows must have the same number of columns as the 'header' row.

[8] There must be at least one (1) row after the first 'header' row.

[9] There is no limit to the numer of 'header' columns. Example: Zotero export .csv
files have at least 87 columns.

[10] There is no limit to the number of rows that contain textual values.

[11] The `}
        <i>minimum</i>
        {` number of columns is two (2): one for the value to be updated
into Calibre, and one with the values to match to book metadata to select the
appropriate books to be updated.

See:  `}
        <i>'import_csv_to_update_metadata_example.csv'</i>
        {` located in your .../calibre/
plugins/job_spy/resources directory.`}
      </Note>
    </>
  );
}

export default function App() {
  return (
    <div className={`relative flex min-h-screen flex-col overflow-hidden bg-[#fffafa] ${UI}`}>
      <TitleBar />
      <Toolbar />
      <SearchRow />
      <BookTable />
      <BottomBars />
      <ImportDialog />
      <HeaderList />
      <MetadataMenu />
      <ToolBoxMenu />
      <div className="pointer-events-none absolute top-[15px] left-[1457px] h-[66px] w-[58px] bg-[#ffff00] mix-blend-multiply" />
      <Callout />
      <Arrows />
      <Notes />
    </div>
  );
}
